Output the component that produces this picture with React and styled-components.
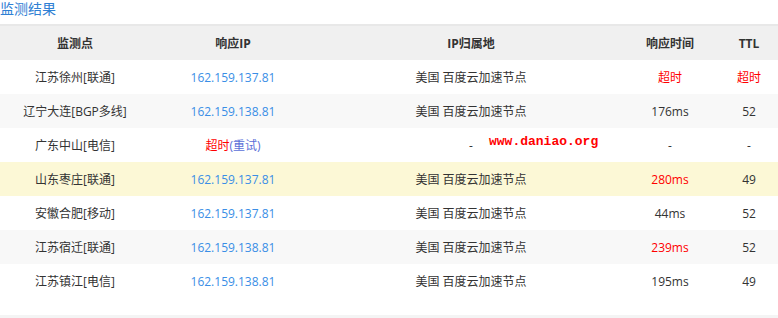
import React from 'react'
import styled, { createGlobalStyle } from 'styled-components'

const GlobalStyle = createGlobalStyle`
  body {
    margin: 0;
    background: #fff;
    font-family: "Open Sans", "Noto Sans CJK SC", sans-serif;
    color: #333;
  }
`

const Page = styled.div`
  position: relative;
  width: 778px;
  height: 318px;
  overflow: hidden;
  display: flex;
  flex-direction: column;
`

const Title = styled.div`
  height: 24px;
  font-size: 14px;
  line-height: 16px;
  color: #2f80d4;
  font-family: "Noto Sans CJK SC", sans-serif;
`

const Table = styled.div`
  border-top: 2px solid #e8e8e8;
  display: flex;
  flex-direction: column;
`

const Row = styled.div`
  display: grid;
  grid-template-columns: 150px 166px 310px 88px 64px;
  height: 34px;
  align-items: center;
  background: ${p => p.$bg || '#fff'};
  font-size: 12px;
  font-weight: ${p => (p.$head ? 700 : 400)};
`

const Cell = styled.div`
  display: flex;
  justify-content: center;
  white-space: nowrap;
  padding-left: ${p => p.$pad || 0}px;
  color: ${p => p.$color || '#333'};
`

const Ip = styled.span`
  color: #3a8ee6;
`

const Red = styled.span`
  color: #ff0000;
`

const Retry = styled.span`
  color: #5b6fd8;
`

const Spacer = styled.div`
  flex: 1;
`

const Bottom = styled.div`
  height: 3px;
  background: #f4f4f4;
`

const Watermark = styled.div`
  position: absolute;
  left: 489px;
  top: 134px;
  font-family: "Liberation Mono", monospace;
  font-weight: 700;
  font-size: 13px;
  color: #ff0000;
`

const rows = [
  { node: '江苏徐州[联通]', ip: '162.159.137.81', loc: '美国 百度云加速节点', time: '超时', ttl: '超时', timeRed: true, ttlRed: true },
  { node: '辽宁大连[BGP多线]', ip: '162.159.138.81', loc: '美国 百度云加速节点', time: '176ms', ttl: '52', bg: '#f8f8f8' },
  { node: '广东中山[电信]', timeout: true, loc: '-', time: '-', ttl: '-' },
  { node: '山东枣庄[联通]', ip: '162.159.137.81', loc: '美国 百度云加速节点', time: '280ms', ttl: '49', timeRed: true, bg: '#fcf8d6' },
  { node: '安徽合肥[移动]', ip: '162.159.137.81', loc: '美国 百度云加速节点', time: '44ms', ttl: '52' },
  { node: '江苏宿迁[联通]', ip: '162.159.138.81', loc: '美国 百度云加速节点', time: '239ms', ttl: '52', timeRed: true, bg: '#f8f8f8' },
  { node: '江苏镇江[电信]', ip: '162.159.138.81', loc: '美国 百度云加速节点', time: '195ms', ttl: '49' },
]

const App = () => {
  return (
    <Page>
      <GlobalStyle />
      <Title>监测结果</Title>
      <Table>
        <Row $head $bg="#f0f0f0">
          <Cell>监测点</Cell>
          <Cell>响应IP</Cell>
          <Cell>IP归属地</Cell>
          <Cell>响应时间</Cell>
          <Cell $pad={6}>TTL</Cell>
        </Row>
        {rows.map((r, i) => (
          <Row key={i} $bg={r.bg}>
            <Cell>{r.node}</Cell>
            <Cell>
              {r.timeout ? (
                <span><Red>超时</Red><Retry>(重试)</Retry></span>
              ) : (
                <Ip>{r.ip}</Ip>
              )}
            </Cell>
            <Cell>{r.loc}</Cell>
            <Cell $color={r.timeRed ? '#ff0000' : undefined}>{r.time}</Cell>
            <Cell $pad={6} $color={r.ttlRed ? '#ff0000' : undefined}>{r.ttl}</Cell>
          </Row>
        ))}
      </Table>
      <Spacer />
      <Bottom />
      <Watermark>www.daniao.org</Watermark>
    </Page>
  )
}

export default App
